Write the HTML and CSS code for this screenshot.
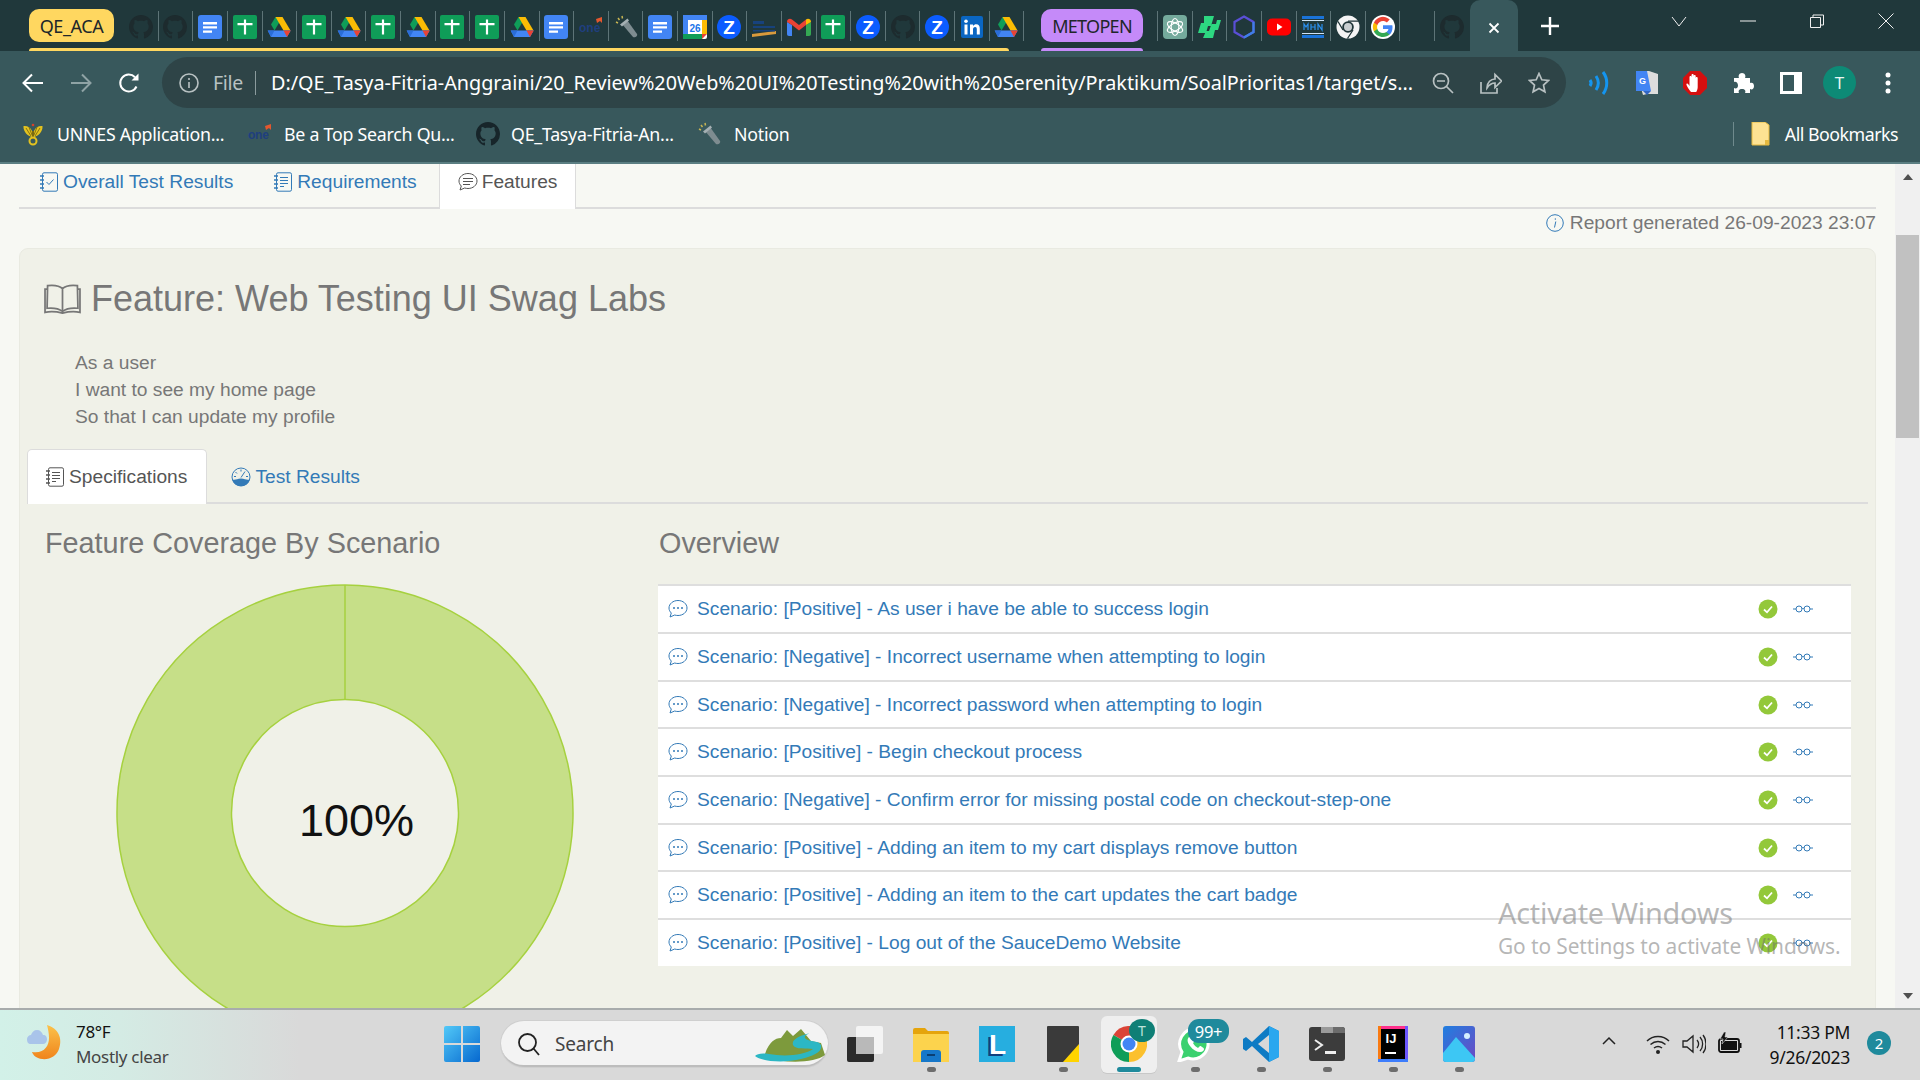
FILE: index.html
```html
<!DOCTYPE html>
<html lang="en">
<head>
<meta charset="utf-8">
<title>Serenity Report</title>
<link rel="stylesheet" href="styles.css">
</head>
<body>
<svg class="sprite" xmlns="http://www.w3.org/2000/svg">
  <defs>
    <symbol id="gh" viewBox="0 0 16 16"><path fill="currentColor" d="M8 0C3.58 0 0 3.58 0 8c0 3.54 2.29 6.53 5.47 7.59.4.07.55-.17.55-.38 0-.19-.01-.82-.01-1.49-2.01.37-2.53-.49-2.69-.94-.09-.23-.48-.94-.82-1.13-.28-.15-.68-.52-.01-.53.63-.01 1.08.58 1.23.82.72 1.21 1.87.87 2.33.66.07-.52.28-.87.51-1.07-1.78-.2-3.64-.89-3.64-3.95 0-.87.31-1.59.82-2.15-.08-.2-.36-1.02.08-2.12 0 0 .67-.21 2.2.82.64-.18 1.32-.27 2-.27.68 0 1.36.09 2 .27 1.53-1.04 2.2-.82 2.2-.82.44 1.1.16 1.92.08 2.12.51.56.82 1.27.82 2.15 0 3.07-1.87 3.75-3.65 3.95.29.25.54.73.54 1.48 0 1.07-.01 1.93-.01 2.2 0 .21.15.46.55.38A8.013 8.013 0 0016 8c0-4.42-3.58-8-8-8z"/></symbol>
    <symbol id="docs" viewBox="0 0 24 24"><rect width="24" height="24" rx="3" fill="#4285f4"/><path d="M5 7h14v2.400H5zM5 11.200h14v2.400H5zM5 15.400h9v2.400H5z" fill="#fff"/></symbol>
    <symbol id="sheets" viewBox="0 0 24 24"><rect width="24" height="24" rx="2" fill="#0f9d58"/><path d="M4.500 8h15v2.200h-15zM10.900 4.500h2.200v15h-2.200z" fill="#fff"/></symbol>
    <symbol id="drive" viewBox="0 0 24 24"><path d="M8.500 2h7l-8 13.500L4 9.500z" fill="#0f9d58"/><path d="M8.500 2h7l8 13.500h-7z" fill="#fbbc04"/><path d="M.7 15.500h23L20 22H4z" fill="#4285f4"/><path d="M16.500 15.500h7.200L20 22z" fill="#ea4335"/><path d="M.7 15.500l6.800 0L4 22z" fill="#2a6dd8"/></symbol>
    <symbol id="one" viewBox="0 0 24 24"><text x="0" y="17" class="one-txt">one</text><path d="M17 4l6-2v6l-2-2-3 2z" fill="#e4572e"/></symbol>
    <symbol id="flash" viewBox="0 0 24 24"><path d="M8 9l5-4 10 14c1 2-2 4-4 3z" fill="#7e8c90"/><path d="M6 9.500l7.500-6 1.500 2-7 6z" fill="#a5b0b3"/><path d="M2 7l2 1M4 3l1.500 2M8 1l.5 2.500" stroke="#c8b552" stroke-width="1.500"/></symbol>
    <symbol id="cal" viewBox="0 0 24 24"><rect width="24" height="24" rx="2" fill="#fff"/><path d="M0 0h24v5H0z" fill="#4285f4"/><path d="M0 5h5v14H0z" fill="#4285f4"/><path d="M19 5h5v14h-5z" fill="#fbbc04"/><path d="M0 19h19v5H0z" fill="#0f9d58"/><path d="M19 19h5l-5 5z" fill="#ea4335"/><text x="12" y="16.500" class="cal-txt">26</text></symbol>
    <symbol id="zoom" viewBox="0 0 24 24"><circle cx="12" cy="12" r="12" fill="#0b5cff"/><text x="12" y="19" class="zoom-txt">Z</text></symbol>
    <symbol id="kampus" viewBox="0 0 24 24"><path d="M0 19l24-3v3L0 22z" fill="#d89a3c"/><path d="M1 6h11v3H1zM1 11h22v2H1zM1 15h22v1.500H1z" fill="#17427c"/></symbol>
    <symbol id="gmail" viewBox="0 0 24 24"><path d="M0 7v12c0 1 .7 2 2 2h3V10z" fill="#4285f4"/><path d="M24 7v12c0 1-.7 2-2 2h-3V10z" fill="#34a853"/><path d="M0 7c0-3 3-4 5-2.500l7 5.500 7-5.500V10l-7 5.500L5 10 0 7z" fill="#ea4335"/><path d="M19 4.500C21 3 24 4 24 7l-5 3z" fill="#fbbc04"/></symbol>
    <symbol id="linkedin" viewBox="0 0 24 24"><rect x="1" y="1" width="22" height="22" rx="2" fill="#0a66c2"/><path d="M4.500 9.500h3v10h-3z" fill="#fff"/><circle cx="6" cy="6.200" r="1.800" fill="#fff"/><path d="M10 9.500h3v1.500c.8-1.200 2-1.800 3.200-1.800 2.600 0 3.600 1.700 3.600 4.500v5.800h-3v-5.300c0-1.500-.5-2.300-1.700-2.300-1.300 0-2.100.9-2.100 2.400v5.200h-3z" fill="#fff"/></symbol>
    <symbol id="gpt" viewBox="0 0 24 24"><rect width="24" height="24" rx="4" fill="#74aa9c"/><g fill="none" stroke="#fff" stroke-width="1.100"><ellipse cx="12" cy="12" rx="3.800" ry="8.500"/><ellipse cx="12" cy="12" rx="3.800" ry="8.500" transform="rotate(60 12 12)"/><ellipse cx="12" cy="12" rx="3.800" ry="8.500" transform="rotate(120 12 12)"/></g></symbol>
    <symbol id="bolt" viewBox="0 0 24 24"><path d="M7 1h10l-3 10h-3l-2 7H1l3-10h3z" fill="#2dd881"/><path d="M20 5h4l-3 10h-3l-2 8H6l3-7h3l2.500-7h4.500z" fill="#2dd881"/></symbol>
    <symbol id="hex" viewBox="0 0 24 24"><path d="M12 1.500l9.500 5.500v10L12 22.500 2.500 17V7z" fill="none" stroke="#5a4fd6" stroke-width="2.200"/><path d="M12 22.500l9.500-5.500V7" fill="none" stroke="#3f7fe8" stroke-width="2.200"/></symbol>
    <symbol id="yt" viewBox="0 0 24 24"><rect y="3.500" width="24" height="17" rx="5" fill="#f00"/><path d="M10 8.500l5.500 3.500-5.500 3.500z" fill="#fff"/></symbol>
    <symbol id="mhn" viewBox="0 0 24 24"><path d="M1 1h22v3H1zM1 20h22v3H1z" fill="#1a73d8"/><path d="M1 5h22v1H1zM1 18h22v1H1z" fill="#cfe3f7"/><path d="M3 15V9l2 3 2-3v6M10 9v6M14 9v6M10 12h4M17 15V9l4 6V9" stroke="#2a90f0" fill="none" stroke-width="1.200"/></symbol>
    <symbol id="chromew" viewBox="0 0 24 24"><circle cx="12" cy="12" r="11.500" fill="#f4f4f4"/><circle cx="12" cy="12" r="5.800" fill="#203538"/><circle cx="12" cy="12" r="4" fill="#c9ced0"/><path d="M12 6.200h10.500M7 15L2 6.500M17 15l-5.500 8.500" stroke="#203538" stroke-width="1.300"/></symbol>
    <symbol id="google" viewBox="0 0 48 48"><circle cx="24" cy="24" r="24" fill="#fff"/><path d="M43 24.500c0-1.400-.1-2.700-.4-4H24v7.600h10.900a9.300 9.300 0 0 1-4 6.100v5h6.500c3.700-3.500 5.600-8.600 5.600-14.700z" fill="#4285f4"/><path d="M24 44c5.400 0 9.900-1.800 13.300-4.800l-6.500-5c-1.800 1.200-4.100 1.900-6.800 1.900-5.200 0-9.700-3.500-11.300-8.300H5.900v5.200C9.200 39.500 16 44 24 44z" fill="#34a853"/><path d="M12.700 27.800a12 12 0 0 1 0-7.600V15H5.900a20 20 0 0 0 0 18z" fill="#fbbc04"/><path d="M24 11.900c2.900 0 5.600 1 7.700 3l5.800-5.800A20 20 0 0 0 5.900 15l6.800 5.200c1.600-4.800 6-8.300 11.300-8.300z" fill="#ea4335"/></symbol>

    <symbol id="chat" viewBox="0 0 20 20"><path d="M10 1.500c5 0 9 3.300 9 7.500s-4 7.500-9 7.500c-1.200 0-2.300-.2-3.300-.5L2 18l1.300-4C1.900 12.700 1 11 1 9c0-4.200 4-7.500 9-7.500z" fill="none" stroke="currentColor" stroke-width="1"/><circle cx="6" cy="9" r="1" fill="currentColor"/><circle cx="10" cy="9" r="1" fill="currentColor"/><circle cx="14" cy="9" r="1" fill="currentColor"/></symbol>
    <symbol id="chatlines" viewBox="0 0 20 20"><path d="M10 1.500c5 0 9 3.300 9 7.500s-4 7.500-9 7.500c-1.200 0-2.300-.2-3.300-.5L2 18l1.300-4C1.900 12.700 1 11 1 9c0-4.200 4-7.500 9-7.500z" fill="none" stroke="currentColor" stroke-width="1"/><path d="M5 6.500h10M5 9.500h10M5 12.500h7" stroke="currentColor" stroke-width="1"/></symbol>
    <symbol id="notebook" viewBox="0 0 20 20"><rect x="3.500" y=".8" width="15" height="18.400" rx="1.500" fill="none" stroke="currentColor" stroke-width="1"/><path d="M7 5.500h8M7 8.500h8M7 11.500h8M7 14.500h4" stroke="currentColor" stroke-width="1"/><path d="M1 4h4M1 8h4M1 12h4M1 16h4" stroke="currentColor" stroke-width="1.500" stroke-dasharray="2 1"/></symbol>
    <symbol id="notecheck" viewBox="0 0 20 20"><rect x="3.500" y=".8" width="15" height="18.400" rx="1.500" fill="none" stroke="currentColor" stroke-width="1"/><path d="M7.500 10l2.500 2.500 4.500-5" fill="none" stroke="currentColor" stroke-width="1"/><path d="M1 4h4M1 8h4M1 12h4M1 16h4" stroke="currentColor" stroke-width="1.500" stroke-dasharray="2 1"/></symbol>
    <symbol id="gauge" viewBox="0 0 20 20"><circle cx="10" cy="10" r="9" fill="none" stroke="currentColor" stroke-width="1"/><path d="M1.500 12.500c3 1 4.500-1 8.500-1s5.500 2 8.500 1c-.5 4-4 6.500-8.500 6.500s-8-2.500-8.500-6.500z" fill="currentColor"/><path d="M10 10.500L14 4.500M10 2.500v2M4.500 5l1.500 1.500M3 9.500h2M15 9.500h2" stroke="currentColor" stroke-width="1"/></symbol>
    <symbol id="book" viewBox="0 0 36 30"><path d="M18 5C15 2 8 1.500 3.500 2L3 24c5-.5 11 0 15 3 4-3 10-3.500 15-3L32.500 2C28 1.500 21 2 18 5zM18 5v22M3 5.500H1v22.500c5-1 12-.5 17 .8 5-1.300 12-1.800 17-.8V5.500h-2" fill="none" stroke="currentColor" stroke-width="1.700"/></symbol>
    <symbol id="glasses" viewBox="0 0 20 10"><circle cx="6" cy="5" r="3" fill="none" stroke="currentColor" stroke-width="1"/><circle cx="14" cy="5" r="3" fill="none" stroke="currentColor" stroke-width="1"/><path d="M0 5h3M9 5c.5-1 1.500-1 2 0M17 5h3" fill="none" stroke="currentColor" stroke-width="1"/></symbol>
    <symbol id="passed" viewBox="0 0 20 20"><circle cx="10" cy="10" r="9.500" fill="#93c83a"/><path d="M6 10.500l3 2.800 5-5.800" fill="none" stroke="#fff" stroke-width="1.800"/></symbol>
  </defs>
</svg>

<div class="screen">
  <header class="tabstrip">
    <div class="group group-a">
      <div class="chip chip-yellow">QE_ACA</div>
      <div class="tab tab-first"><svg class="fav dark"><use href="#gh"/></svg></div>
      <div class="tab"><svg class="fav dark"><use href="#gh"/></svg></div>
      <div class="tab"><svg class="fav"><use href="#docs"/></svg></div>
      <div class="tab"><svg class="fav"><use href="#sheets"/></svg></div>
      <div class="tab"><svg class="fav"><use href="#drive"/></svg></div>
      <div class="tab"><svg class="fav"><use href="#sheets"/></svg></div>
      <div class="tab"><svg class="fav"><use href="#drive"/></svg></div>
      <div class="tab"><svg class="fav"><use href="#sheets"/></svg></div>
      <div class="tab"><svg class="fav"><use href="#drive"/></svg></div>
      <div class="tab"><svg class="fav"><use href="#sheets"/></svg></div>
      <div class="tab"><svg class="fav"><use href="#sheets"/></svg></div>
      <div class="tab"><svg class="fav"><use href="#drive"/></svg></div>
      <div class="tab"><svg class="fav"><use href="#docs"/></svg></div>
      <div class="tab"><svg class="fav"><use href="#one"/></svg></div>
      <div class="tab"><svg class="fav"><use href="#flash"/></svg></div>
      <div class="tab"><svg class="fav"><use href="#docs"/></svg></div>
      <div class="tab"><svg class="fav"><use href="#cal"/></svg></div>
      <div class="tab"><svg class="fav"><use href="#zoom"/></svg></div>
      <div class="tab"><svg class="fav"><use href="#kampus"/></svg></div>
      <div class="tab"><svg class="fav"><use href="#gmail"/></svg></div>
      <div class="tab"><svg class="fav"><use href="#sheets"/></svg></div>
      <div class="tab"><svg class="fav"><use href="#zoom"/></svg></div>
      <div class="tab"><svg class="fav dark"><use href="#gh"/></svg></div>
      <div class="tab"><svg class="fav"><use href="#zoom"/></svg></div>
      <div class="tab"><svg class="fav"><use href="#linkedin"/></svg></div>
      <div class="tab"><svg class="fav"><use href="#drive"/></svg></div>
    </div>
    <div class="group group-b">
      <div class="chip chip-purple">METOPEN</div>
    </div>
    <div class="loose-tabs">
      <div class="tab"><svg class="fav"><use href="#gpt"/></svg></div>
      <div class="tab"><svg class="fav"><use href="#bolt"/></svg></div>
      <div class="tab"><svg class="fav"><use href="#hex"/></svg></div>
      <div class="tab"><svg class="fav"><use href="#yt"/></svg></div>
      <div class="tab"><svg class="fav"><use href="#mhn"/></svg></div>
      <div class="tab"><svg class="fav"><use href="#chromew"/></svg></div>
      <div class="tab"><svg class="fav"><use href="#google"/></svg></div>
      <div class="tab"></div>
      <div class="tab tab-last"><svg class="fav dark"><use href="#gh"/></svg></div>
    </div>
    <div class="active-tab">
      <svg class="close-x" viewBox="0 0 12 12"><path d="M1.500 1.500l9 9M10.500 1.500l-9 9"/></svg>
    </div>
    <svg class="new-tab" viewBox="0 0 18 18"><path d="M9 0v18M0 9h18"/></svg>
    <div class="win-controls">
      <svg class="win" viewBox="0 0 16 16"><path d="M1 4l7 9 7-9"/></svg>
      <svg class="win" viewBox="0 0 16 16"><path d="M0 8h16"/></svg>
      <svg class="win" viewBox="0 0 16 16"><path d="M1.500 4.500h10v10h-10zM4 4.500V2h10.500v10H11.500"/></svg>
      <svg class="win" viewBox="0 0 16 16"><path d="M.5.5l15 15M15.500.5l-15 15"/></svg>
    </div>
  </header>

  <div class="toolbar">
    <div class="nav-buttons">
      <svg class="nav-ico" viewBox="0 0 22 22"><path d="M21 11H2M10 2.500L1.500 11l8.500 8.500"/></svg>
      <svg class="nav-ico off" viewBox="0 0 22 22"><path d="M1 11h19M12 2.500l8.500 8.500-8.500 8.500"/></svg>
      <svg class="nav-ico" viewBox="0 0 22 22"><path d="M18.500 14.500A8.500 8.500 0 1 1 17 5.200"/><path class="solid" d="M13.500 8.500H20.500V1.500z"/></svg>
    </div>
    <div class="omnibox">
      <svg class="omni-info" viewBox="0 0 20 20"><circle cx="10" cy="10" r="9"/><path d="M10 9v6M10 5v2"/></svg>
      <span class="omni-file">File</span>
      <span class="omni-sep"></span>
      <span class="omni-url">D:/QE_Tasya-Fitria-Anggraini/20_Review%20Web%20UI%20Testing%20with%20Serenity/Praktikum/SoalPrioritas1/target/s...</span>
      <svg class="omni-act" viewBox="0 0 22 22"><circle cx="9" cy="9" r="7.500"/><path d="M5 9h8M14.500 14.500L21 21"/></svg>
      <svg class="omni-act" viewBox="0 0 22 22"><path d="M1 10v11h16v-5M7 16c0-6 4-9 8-9V2.500L21.500 9 15 15.500V11c-4 0-6 2-8 5z"/></svg>
      <svg class="omni-act" viewBox="0 0 22 22"><path d="M11 1.500l2.800 6.300 6.700.7-5 4.600 1.400 6.700L11 16.400l-5.900 3.400 1.400-6.700-5-4.600 6.700-.7z"/></svg>
    </div>
    <div class="extensions">
      <svg class="ext" viewBox="0 0 24 24"><path class="wave" d="M2 9c1.500 2 1.500 4 0 6M8 5c3 4.500 3 9.500 0 14M15 1c5 6.500 5 15.500 0 22"/></svg>
      <svg class="ext" viewBox="0 0 24 24"><path d="M1 0h13l9 3v20H12L8 24z" fill="#ddd"/><path d="M1 0h11l4 20H1z" fill="#4285f4"/><path d="M8 20h8l-4 4z" fill="#3367c4"/><text x="7.500" y="13" class="gt-txt">G</text></svg>
      <svg class="ext" viewBox="0 0 24 24"><path d="M7 0h10l7 7v10l-7 7H7l-7-7V7z" fill="#d50f0f"/><path d="M8 21c-2-2-3.500-5-4.500-7-.5-1.500 1-2 2-.5l1 1.500V6c0-1.500 2-1.500 2 0v4-6c0-1.500 2.200-1.500 2.200 0v6-5c0-1.500 2-1.500 2 0v5-3c0-1.500 2-1.500 2 0v9c0 2-.5 3-1.500 5z" fill="#fff"/></svg>
      <svg class="ext" viewBox="0 0 24 24"><path fill="#fff" d="M3 7h5c-1-2 0-5 3-5s4 3 3 5h5v5c2-1 4 0 4 3s-2 4-4 3v4h-5c1-2 0-4-3-4s-4 2-3 4H3v-5c2 1 4 0 4-2.500S5 10 3 11z"/></svg>
      <svg class="ext" viewBox="0 0 24 24"><path fill="#fff" fill-rule="evenodd" d="M1 1h22v22H1zM4 4v16h11V4z"/></svg>
      <div class="avatar">T</div>
      <svg class="ext dots" viewBox="0 0 24 24"><circle cx="12" cy="4" r="2.500" fill="#fff"/><circle cx="12" cy="12" r="2.500" fill="#fff"/><circle cx="12" cy="20" r="2.500" fill="#fff"/></svg>
    </div>
  </div>

  <div class="bookmarks">
    <div class="bm bm-unnes">
      <svg class="bm-ico" viewBox="0 0 24 24"><path d="M11 15C7 14 2 10 2.500 4 6 3.500 9.500 5 11 9zM13 15c4-1 9-5 8.500-11C18 3.500 14.500 5 13 9z" fill="#e3c21f"/><path d="M5 6l5 8M8 5l3 8M19 6l-5 8M16 5l-3 8" stroke="#7b6a10" stroke-width=".9"/><path d="M11 9h2v8h-2z" fill="#7b6a10"/><circle cx="12" cy="19" r="3.500" fill="none" stroke="#e3c21f" stroke-width="2"/><circle cx="12" cy="3" r="1.300" fill="#d8402a"/></svg>
      <span>UNNES Application...</span>
    </div>
    <div class="bm bm-one">
      <svg class="bm-ico"><use href="#one"/></svg>
      <span>Be a Top Search Qu...</span>
    </div>
    <div class="bm bm-gh">
      <svg class="bm-ico gh-bm"><use href="#gh"/></svg>
      <span>QE_Tasya-Fitria-An...</span>
    </div>
    <div class="bm bm-notion">
      <svg class="bm-ico"><use href="#flash"/></svg>
      <span>Notion</span>
    </div>
    <div class="bm bm-all">
      <svg class="bm-ico" viewBox="0 0 19 24"><path d="M1 0h13l4 3v20H1z" fill="#fde293" stroke="#e6b93f"/><path d="M14 18h4v5h-4z" fill="#e6b93f"/></svg>
      <span>All Bookmarks</span>
    </div>
  </div>
  <div class="chrome-edge"></div>

  <main class="viewport">
    <div class="page">
      <nav class="main-tabs">
        <a class="mtab"><svg class="mi"><use href="#notecheck"/></svg>Overall Test Results</a>
        <a class="mtab"><svg class="mi"><use href="#notebook"/></svg>Requirements</a>
        <a class="mtab mtab-on"><svg class="mi"><use href="#chatlines"/></svg>Features</a>
      </nav>
      <div class="report-date">
        <svg class="info" viewBox="0 0 18 18"><circle cx="9" cy="9" r="8.300"/><path d="M9.800 7.500L8.500 13.500M9.300 4.300v1.500"/></svg>
        <span>Report generated 26-09-2023 23:07</span>
      </div>
      <section class="card">
        <h1 class="feature-title"><svg class="book"><use href="#book"/></svg>Feature: Web Testing UI Swag Labs</h1>
        <div class="story">
          <div>As a user</div>
          <div>I want to see my home page</div>
          <div>So that I can update my profile</div>
        </div>
        <nav class="sub-tabs">
          <a class="stab stab-on"><svg class="mi"><use href="#notebook"/></svg>Specifications</a>
          <a class="stab"><svg class="mi"><use href="#gauge"/></svg>Test Results</a>
        </nav>
        <div class="columns">
          <div class="coverage">
            <h2 class="col-title">Feature Coverage By Scenario</h2>
            <div class="donut">
              <svg class="donut-svg" viewBox="0 0 458 458">
                <path d="M229 1a228 228 0 1 1-.01 0zM229 115.500a113.500 113.500 0 1 0 .01 0z" fill="#c6df88" fill-rule="evenodd" stroke="#a6d13f" stroke-width="1.500"/>
                <path d="M229 1v114.500" stroke="#a6d13f" stroke-width="1.500"/>
              </svg>
              <div class="donut-label">100%</div>
            </div>
          </div>
          <div class="overview">
            <h2 class="col-title">Overview</h2>
            <div class="scenarios">
              <div class="row"><svg class="row-chat"><use href="#chat"/></svg><a class="row-text">Scenario: [Positive] - As user i have be able to success login</a><svg class="row-pass"><use href="#passed"/></svg><svg class="row-glass"><use href="#glasses"/></svg></div>
              <div class="row"><svg class="row-chat"><use href="#chat"/></svg><a class="row-text">Scenario: [Negative] - Incorrect username when attempting to login</a><svg class="row-pass"><use href="#passed"/></svg><svg class="row-glass"><use href="#glasses"/></svg></div>
              <div class="row"><svg class="row-chat"><use href="#chat"/></svg><a class="row-text">Scenario: [Negative] - Incorrect password when attempting to login</a><svg class="row-pass"><use href="#passed"/></svg><svg class="row-glass"><use href="#glasses"/></svg></div>
              <div class="row"><svg class="row-chat"><use href="#chat"/></svg><a class="row-text">Scenario: [Positive] - Begin checkout process</a><svg class="row-pass"><use href="#passed"/></svg><svg class="row-glass"><use href="#glasses"/></svg></div>
              <div class="row"><svg class="row-chat"><use href="#chat"/></svg><a class="row-text">Scenario: [Negative] - Confirm error for missing postal code on checkout-step-one</a><svg class="row-pass"><use href="#passed"/></svg><svg class="row-glass"><use href="#glasses"/></svg></div>
              <div class="row"><svg class="row-chat"><use href="#chat"/></svg><a class="row-text">Scenario: [Positive] - Adding an item to my cart displays remove button</a><svg class="row-pass"><use href="#passed"/></svg><svg class="row-glass"><use href="#glasses"/></svg></div>
              <div class="row"><svg class="row-chat"><use href="#chat"/></svg><a class="row-text">Scenario: [Positive] - Adding an item to the cart updates the cart badge</a><svg class="row-pass"><use href="#passed"/></svg><svg class="row-glass"><use href="#glasses"/></svg></div>
              <div class="row"><svg class="row-chat"><use href="#chat"/></svg><a class="row-text">Scenario: [Positive] - Log out of the SauceDemo Website</a><svg class="row-pass"><use href="#passed"/></svg><svg class="row-glass"><use href="#glasses"/></svg></div>
            </div>
          </div>
        </div>
      </section>
    </div>
    <div class="scrollbar">
      <span class="arrow-up"></span>
      <span class="thumb"></span>
      <span class="arrow-down"></span>
    </div>
  </main>

  <footer class="taskbar">
    <div class="weather">
      <svg class="weather-ico" viewBox="0 0 36 42"><defs><linearGradient id="moon-g" x1="0" y1="0" x2="0" y2="1"><stop offset="0" stop-color="#fbc24a"/><stop offset="1" stop-color="#f0841c"/></linearGradient></defs><path d="M20 3c11 3 16 13 12 24-3 9-14 13-23 8-3-2-4-5-4-5 12 2 17-6 17-14 0-5-1-9-2-13z" fill="url(#moon-g)"/><path d="M4 22c-3 0-4-2-4-5 0-2 2-4 4-4 1-3 3-5 6-5s5 2 6 5c3 0 4 2 4 4.500S18 22 16 22z" fill="#a9c4ea"/></svg>
      <div class="weather-text"><div>78°F</div><div class="weather-sub">Mostly clear</div></div>
    </div>
    <svg class="start" viewBox="0 0 36 36"><defs><linearGradient id="win-g" x1="0" y1="0" x2="1" y2="1"><stop offset="0" stop-color="#52c9f8"/><stop offset="1" stop-color="#0668cf"/></linearGradient></defs><path d="M2 0h15v17H0V2a2 2 0 0 1 2-2zM19 0h15a2 2 0 0 1 2 2v15H19zM0 19h17v17H2a2 2 0 0 1-2-2zM19 19h17v15a2 2 0 0 1-2 2H19z" fill="url(#win-g)"/></svg>
    <div class="search">
      <svg class="search-ico" viewBox="0 0 24 24"><circle cx="10.500" cy="10.500" r="8.500"/><path d="M16.500 16.500L22 23"/></svg>
      <span class="search-text">Search</span>
      <svg class="search-art" viewBox="0 0 72 36"><path d="M10 28C14 16 20 12 26 12l6-8 6 6 8-7 10 12 10 2 4 12c-10 8-40 9-60 2z" fill="#7d9a3c"/><path d="M56 7c-10 2-20 6-18 12 2 5 14 3 20 4-8 6-28 8-44 5C6 27 2 28 0 30c8 6 30 7 46 3 12-3 22-7 20-14-2-5-14-3-16-7-1-2 2-4 6-5z" fill="#2cb7c4"/></svg>
    </div>
    <div class="apps">
      <div class="app"><svg class="app-ico" viewBox="0 0 36 36"><rect x="9" y="0" width="27" height="28" rx="2" fill="#f4f4f4"/><rect y="11" width="27" height="25" rx="2" fill="#2b2b2b"/><rect x="9" y="11" width="18" height="17" fill="#b9b9b9"/></svg></div>
      <div class="app app-dot"><svg class="app-ico" viewBox="0 0 36 36"><path d="M0 4a2 2 0 0 1 2-2h10l3 3h19a2 2 0 0 1 2 2v4H0z" fill="#e5a40c"/><path d="M0 8h36v28H0z" fill="#fcd34d"/><path d="M8 27a3 3 0 0 1 3-3h14a3 3 0 0 1 3 3v9H8z" fill="#1677c9"/><path d="M14 29h8" stroke="#0b3f73" stroke-width="2"/></svg></div>
      <div class="app"><svg class="app-ico" viewBox="0 0 36 36"><rect width="36" height="36" fill="#26aee0"/><text x="16" y="30" class="l-shadow">L</text><text x="18.500" y="28" class="l-txt">L</text></svg></div>
      <div class="app app-dot"><svg class="app-ico narrow" viewBox="0 0 32 36"><rect width="32" height="36" rx="1" fill="#3a3a3a"/><path d="M32 18v18H16z" fill="#ffd400"/></svg></div>
      <div class="app app-on">
        <div class="chrome-tile">
          <svg class="chrome-ico" viewBox="0 0 36 36"><path d="M18 18L33.600 9A18 18 0 0 0 2.400 9z" fill="#db4437"/><path d="M18 18L33.600 9A18 18 0 0 1 18 36z" fill="#fbc02d"/><path d="M18 18L18 36A18 18 0 0 1 2.400 9z" fill="#0f9d58"/><circle cx="18" cy="18" r="8.500" fill="#fff"/><circle cx="18" cy="18" r="6.500" fill="#4285f4"/></svg>
          <span class="chrome-badge">T</span>
        </div>
        <span class="pill"></span>
      </div>
      <div class="app app-dot">
        <svg class="app-ico" viewBox="0 0 36 36"><path d="M18 3a15 15 0 0 0-13 23L2 35l9-3A15 15 0 1 0 18 3z" fill="#3bd16f" stroke="#fff" stroke-width="3"/><path d="M12 11c-2 2-2 5 1 9s7 6 10 6 4-2 4-3-3-3-4-3l-2 2c-2-1-4-3-5-5l2-2c0-1-2-4-3-4z" fill="#fff"/></svg>
        <span class="count-badge">99+</span>
      </div>
      <div class="app app-dot"><svg class="app-ico" viewBox="0 0 36 36"><path d="M26 0l10 5v26l-10 5L9 20 3 25l-3-2V13l3-2 6 5z" fill="#0e7bc4"/><path d="M26 0l10 5v26l-10 5z" fill="#2aa7ef"/><path d="M26 9L15 18l11 9z" fill="#d8d8d8"/></svg></div>
      <div class="app app-dot"><svg class="app-ico" viewBox="0 0 36 36"><rect y="1" width="36" height="34" rx="3" fill="#3c3c3c"/><path d="M12 1h12v6H12z" fill="#9a9a9a"/><path d="M24 1h9a3 3 0 0 1 3 3v3H24z" fill="#6c6c6c"/><path d="M6 14l7 5-7 5" fill="none" stroke="#eee" stroke-width="2"/><path d="M16 25h11v3H16z" fill="#eee"/></svg></div>
      <div class="app app-dot"><svg class="app-ico narrow" viewBox="0 0 30 36"><rect width="30" height="36" fill="#000"/><path d="M0 0h30v3H0z" fill="#ff318c"/><path d="M27 0h3v36h-3z" fill="#6b57ff"/><path d="M0 0h3v36H0z" fill="#f97a12"/><path d="M0 33h30v3H0z" fill="#3d7dfc"/><text x="13" y="17" class="ij-txt">IJ</text><path d="M7 26h11v2H7z" fill="#fff"/></svg></div>
      <div class="app app-dot"><svg class="app-ico narrow" viewBox="0 0 32 36"><defs><linearGradient id="ph-g" x1="0" y1="0" x2="1" y2="1"><stop offset="0" stop-color="#1f7fe0"/><stop offset="1" stop-color="#6d49c4"/></linearGradient></defs><rect width="32" height="36" rx="3" fill="url(#ph-g)"/><circle cx="24" cy="10" r="3" fill="#d5f0ff"/><path d="M0 33V27l13-16 19 21v1a3 3 0 0 1-3 3H3a3 3 0 0 1-3-3z" fill="#3dc7f4"/></svg></div>
    </div>
    <div class="tray">
      <svg class="tray-ico" viewBox="0 0 20 20"><path d="M4 10l6-6 6 6" fill="none" stroke="#222" stroke-width="1.500"/></svg>
      <svg class="tray-ico" viewBox="0 0 24 24"><path d="M1 9c6-6 16-6 22 0M4.500 12.500c4.500-4 10.500-4 15 0M8 16c2.500-2 5.500-2 8 0" fill="none" stroke="#222" stroke-width="1.500"/><circle cx="12" cy="20" r="2" fill="#222"/></svg>
      <svg class="tray-ico" viewBox="0 0 24 24"><path d="M1 9h4l6-5v16l-6-5H1zM15 8c2 2.500 2 5.500 0 8M18 5c3.500 4 3.500 10 0 14M21 3c4 5 4 13 0 18" fill="none" stroke="#222" stroke-width="1.300"/></svg>
      <svg class="tray-ico" viewBox="0 0 24 24"><rect x="1" y="7" width="20" height="13" rx="2" fill="none" stroke="#111" stroke-width="1.800"/><rect x="3" y="9" width="16" height="9" fill="#111"/><path d="M21.500 11h2v5h-2z" fill="#111"/><path d="M6 0L2 7h3L4 12l6-7H7l1-5z" fill="#111" stroke="#ddd" stroke-width=".6"/></svg>
      <div class="clock"><div>11:33 PM</div><div>9/26/2023</div></div>
      <div class="notif">2</div>
    </div>
  </footer>

  <div class="activate">
    <div class="activate-title">Activate Windows</div>
    <div class="activate-sub">Go to Settings to activate Windows.</div>
  </div>
</div>
</body>
</html>
```

FILE: styles.css
```css
* { box-sizing: border-box; }
html, body { margin: 0; height: 100%; overflow: hidden; }
body { font-family: "Noto Sans", "Open Sans", sans-serif; }
.sprite { position: absolute; width: 0; height: 0; }
.screen { position: relative; width: 1920px; height: 1080px; display: flex; flex-direction: column; overflow: hidden; }

/* svg-text helpers */
.one-txt { font: 700 12px "Liberation Sans", sans-serif; fill: #1f3f7f; }
.cal-txt { font: 700 10px "Liberation Sans", sans-serif; fill: #1a73e8; text-anchor: middle; }
.zoom-txt { font: 900 19px "Liberation Sans", sans-serif; fill: #fff; text-anchor: middle; }
.gt-txt { font: 700 9px "Liberation Sans", sans-serif; fill: #fff; text-anchor: middle; }
.l-txt { font: 700 28px "Liberation Sans", sans-serif; fill: #fff; text-anchor: middle; }
.l-shadow { font: 700 28px "Liberation Sans", sans-serif; fill: #10407f; text-anchor: middle; }
.ij-txt { font: 700 13px "Liberation Sans", sans-serif; fill: #fff; text-anchor: middle; }

/* tab strip */
.tabstrip { height: 51px; background: #20383b; display: flex; align-items: stretch; padding-left: 29px; flex: none; }
.group { position: relative; display: flex; align-items: flex-start; }
.group::after { content: ""; position: absolute; left: 0; bottom: 0; height: 3px; border-radius: 3px 3px 0 0; }
.group-a { width: 997px; }
.group-a::after { right: 17px; background: #ffd760; }
.group-b { width: 102px; margin-left: 15px; }
.group-b::after { right: 0; background: #c58af9; }
.chip { height: 33px; margin-top: 9px; border-radius: 10px; font-size: 18px; color: #20262a; display: flex; align-items: center; justify-content: center; letter-spacing: -.4px; flex: none; }
.chip-yellow { width: 85px; background: #ffd760; margin-right: 9px; }
.chip-purple { width: 102px; background: #c58af9; letter-spacing: -.7px; }
.tab { width: 34.630px; height: 30px; margin-top: 11px; border-right: 1px solid #5d7477; display: flex; align-items: center; justify-content: center; flex: none; }
.tab-first { margin-left: 1px; }
.fav { width: 24px; height: 24px; margin-top: 2px; }
.fav.dark { color: #1d2b2e; }
.loose-tabs { display: flex; margin-left: 15px; }
.loose-tabs .tab:first-child { box-shadow: -1px 0 0 #5d7477; }
.tab-last { border-right: 0; }
.active-tab { width: 48px; height: 51px; background: #38585c; border-radius: 10px 10px 0 0; display: flex; align-items: center; justify-content: center; flex: none; }
.close-x { width: 12px; height: 12px; fill: none; stroke: #fff; stroke-width: 1.800; margin-top: 4px; }
.new-tab { width: 18px; height: 18px; fill: none; stroke: #fff; stroke-width: 2.400; margin: 17px 0 0 23px; flex: none; }
.win-controls { display: flex; margin-left: 112px; padding-top: 13px; gap: 53px; align-items: flex-start; }
.win { width: 16px; height: 16px; fill: none; stroke: #f0f0f0; stroke-width: 1; }

/* toolbar */
.toolbar { height: 57px; background: #38585c; display: flex; padding-top: 6px; flex: none; }
.nav-buttons { width: 162px; display: flex; gap: 26px; padding: 15px 0 0 22px; }
.nav-ico { width: 22px; height: 22px; fill: none; stroke: #fff; stroke-width: 2; flex: none; }
.nav-ico.off { stroke: #8fa3a5; }
.solid { fill: #fff; stroke: none; }
.omnibox { width: 1404px; height: 51px; background: #2e4447; border-radius: 26px; display: flex; align-items: center; padding-left: 17px; flex: none; }
.omni-info { width: 20px; height: 20px; fill: none; stroke: #b8c1c2; stroke-width: 1.600; flex: none; }
.omni-file { color: #b8c1c2; font-size: 19.500px; margin-left: 14px; width: 33px; letter-spacing: -.3px; }
.omni-sep { width: 1px; height: 24px; background: #8b9b9d; margin-left: 9px; flex: none; }
.omni-url { color: #fff; font-size: 19.800px; margin-left: 15px; width: 1150px; white-space: nowrap; flex: none; }
.omni-act { width: 22px; height: 22px; fill: none; stroke: #b8c1c2; stroke-width: 1.700; flex: none; margin-left: 26px; }
.omni-url + .omni-act { margin-left: 11px; }
.extensions { display: flex; align-items: center; height: 51px; padding-left: 21.500px; gap: 23.900px; }
.ext { width: 24px; height: 24px; flex: none; }
.wave { fill: none; stroke: #1495f0; stroke-width: 3; }
.avatar { width: 33px; height: 33px; border-radius: 50%; background: #0d8a76; color: #e8f5f2; font-size: 17px; display: flex; align-items: center; justify-content: center; flex: none; margin: 0 -4px; }

/* bookmarks */
.bookmarks { height: 54px; background: #38585c; display: flex; align-items: center; flex: none; padding: 0 0 2px 21px; color: #fff; font-size: 17.800px; letter-spacing: -.25px; }
.bm { display: flex; align-items: center; white-space: nowrap; }
.bm span { display: block; }
.bm-ico { width: 24px; height: 24px; flex: none; }
.gh-bm { color: #17252a; }
.bm-unnes { width: 227px; gap: 12px; }
.bm-one { width: 228px; gap: 12px; }
.bm-gh { width: 221px; gap: 11px; }
.bm-notion { gap: 13px; }
.bm-all { margin-left: auto; padding-right: 22px; letter-spacing: -.5px; }
.bm-all::before { content: ""; width: 1px; height: 24px; background: #6f8a8d; margin-right: 17px; }
.bm-all .bm-ico { width: 19px; height: 24px; margin-right: 15px; }
.chrome-edge { height: 2px; background: #5b7e82; flex: none; }

/* page */
.viewport { flex: 1; display: flex; min-height: 0; background: #f7f8f3; font-family: "Liberation Sans", Arial, sans-serif; }
.page { width: 1895px; padding: 0 19px; overflow: hidden; flex: none; color: #777; font-size: 19.200px; }
a { color: #337ab7; text-decoration: none; }
.mi { width: 20px; height: 20px; margin-right: 4px; flex: none; }
.main-tabs { height: 45px; border-bottom: 2px solid #dcdcdc; display: flex; align-items: flex-start; }
.mtab { height: 43px; padding: 0 20px 7px; display: flex; align-items: center; font-size: 19.200px; }
.mtab-on { height: 45px; margin-left: 2px; background: #fff; color: #555; border: solid #dcdcdc; border-width: 0 1px; padding: 0 18px 9px; }
.report-date { height: 27px; margin-bottom: 12px; display: flex; justify-content: flex-end; align-items: center; font-size: 19.200px; color: #777; white-space: nowrap; }
.info { width: 18px; height: 18px; fill: none; stroke: #337ab7; stroke-width: 1; margin-right: 6px; }
.card { background: #f0f1e8; border: 1px solid #e9eae1; border-radius: 9px 9px 0 0; padding: 0 7px; height: 780px; }
.feature-title { margin: 27px 0 0 17px; height: 46px; font-size: 36px; font-weight: 400; color: #777; display: flex; align-items: center; line-height: 46px; }
.book { width: 37px; height: 32px; margin-right: 10px; color: #777; flex: none; }
.story { margin: 27px 0 0 48px; line-height: 27px; font-size: 19.200px; color: #777; }
.sub-tabs { margin-top: 19px; height: 55px; border-bottom: 2px solid #dcdcdc; display: flex; }
.stab { height: 54px; padding: 2px 18px 0 24px; display: flex; align-items: center; font-size: 19.200px; }
.stab-on { background: #fff; color: #555; border: 1px solid #dcdcdc; border-bottom: 0; border-radius: 5px 5px 0 0; height: 55px; padding: 0 19px 0 17px; }
.columns { display: grid; grid-template-columns: 631px 1193px; }
.col-title { margin: 0; height: 40px; line-height: 40px; font-size: 28.800px; font-weight: 400; color: #777; }
.coverage { padding: 19px 0 0 18px; }
.overview { padding: 19px 0 0 1px; }
.donut { position: relative; width: 458px; height: 458px; margin: 21px 0 0 71px; }
.donut-svg { width: 458px; height: 458px; display: block; }
.donut-label { position: absolute; left: 183px; top: 210px; font-size: 45px; line-height: 54px; color: #111; }
.scenarios { margin: 21px 0 0 -1px; background: #fff; }
.row { height: 47.700px; border-top: 2px solid #dedede; display: flex; align-items: center; font-size: 19.200px; }
.row:first-child { height: 48px; }
.row-chat { width: 20px; height: 20px; margin-left: 10px; color: #337ab7; flex: none; }
.row-text { margin-left: 9px; flex: 1; white-space: nowrap; }
.row-pass { width: 20px; height: 20px; flex: none; }
.row-glass { width: 20px; height: 10px; margin: 0 38px 0 15px; color: #337ab7; flex: none; }

/* scrollbar */
.scrollbar { width: 25px; background: #f0f0f0; position: relative; display: flex; flex-direction: column; align-items: center; flex: none; }
.arrow-up { width: 0; height: 0; margin-top: 10px; border: 5.500px solid transparent; border-top: 0; border-bottom: 6px solid #505050; }
.thumb { width: 23px; height: 203px; margin-top: 55px; background: #c1c1c1; }
.arrow-down { width: 0; height: 0; margin-top: auto; margin-bottom: 9px; border: 5.500px solid transparent; border-bottom: 0; border-top: 6px solid #505050; }

/* taskbar */
.taskbar { height: 72px; flex: none; border-top: 2px solid #a8acac; background: linear-gradient(90deg, #d2f1e8 0, #d4ebe4 120px, #d9d9d9 300px); display: flex; align-items: flex-start; position: relative; color: #111; font-family: "Noto Sans", sans-serif; }
.weather { width: 444px; padding: 12px 0 0 27px; display: flex; flex: none; gap: 13px; }
.weather-ico { width: 36px; height: 42px; flex: none; }
.weather-text { font-size: 17px; line-height: 25px; letter-spacing: -.3px; margin-top: -3px; }
.weather-sub { color: #444; }
.start { width: 36px; height: 36px; margin-top: 16px; flex: none; }
.search { width: 327px; height: 46px; margin: 11px 0 0 21px; border-radius: 23px; background: #f3f3f3; border-bottom: 2px solid #bdbdbd; box-shadow: 0 0 0 1px #cfcfcf; display: flex; align-items: center; position: relative; flex: none; padding-left: 16px; }
.search-ico { width: 24px; height: 24px; fill: none; stroke: #222; stroke-width: 1.800; margin-top: 2px; }
.search-text { font-size: 19px; color: #444; margin: 2px 0 0 14px; letter-spacing: -.2px; }
.search-art { position: absolute; right: 1px; top: 5px; width: 72px; height: 36px; }
.apps { margin-left: 4px; display: flex; flex: none; }
.app { width: 66px; height: 70px; display: flex; justify-content: center; padding-top: 16px; position: relative; flex: none; }
.app-dot::after { content: ""; position: absolute; left: 28.500px; top: 57px; width: 9px; height: 5px; border-radius: 3px; background: #6d6d6d; }
.app-ico { width: 36px; height: 36px; }
.app-ico.narrow { width: 32px; }
.app-on { padding-top: 0; }
.chrome-tile { position: absolute; left: 5px; top: 6px; width: 56px; height: 57px; border-radius: 6px; background: #efefef; box-shadow: 0 1px 0 #c8c8c8; }
.chrome-ico { position: absolute; left: 10px; top: 10px; width: 36px; height: 36px; }
.chrome-badge { position: absolute; left: 28px; top: 3px; width: 26px; height: 23px; border-radius: 50%; background: #0f7f76; color: #bfe3dc; font-size: 14px; display: flex; align-items: center; justify-content: center; }
.pill { position: absolute; left: 21px; top: 57px; width: 24px; height: 5px; border-radius: 3px; background: #1f8a9c; z-index: 1; }
.count-badge { position: absolute; left: 26px; top: 9px; width: 41px; height: 24px; border-radius: 11px; background: #1f8a9c; color: #fff; font-size: 16.500px; display: flex; align-items: center; justify-content: center; letter-spacing: -.3px; }
.tray { margin-left: 107px; display: flex; align-items: flex-start; padding-top: 21px; flex: none; }
.tray-ico { width: 24px; height: 24px; margin-top: 1px; flex: none; margin-right: 12px; }
.tray-ico:first-child { width: 20px; height: 20px; margin: 3px 27px 0 0; }
.clock { text-align: right; font-size: 17.500px; line-height: 25px; width: 110px; margin: -11px 0 0 -14px; letter-spacing: -.3px; }
.notif { width: 24px; height: 24px; border-radius: 50%; background: #1f8a9c; color: #fff; font-size: 15px; display: flex; align-items: center; justify-content: center; margin-left: 17px; }

/* watermark */
.activate { position: absolute; left: 1498px; top: 893px; color: rgba(110, 110, 110, .5); font-family: "Noto Sans", sans-serif; pointer-events: none; }
.activate-title { font-size: 28.800px; line-height: 39px; letter-spacing: -.2px; }
.activate-sub { font-size: 20.900px; line-height: 29px; letter-spacing: -.1px; white-space: nowrap; }
```
